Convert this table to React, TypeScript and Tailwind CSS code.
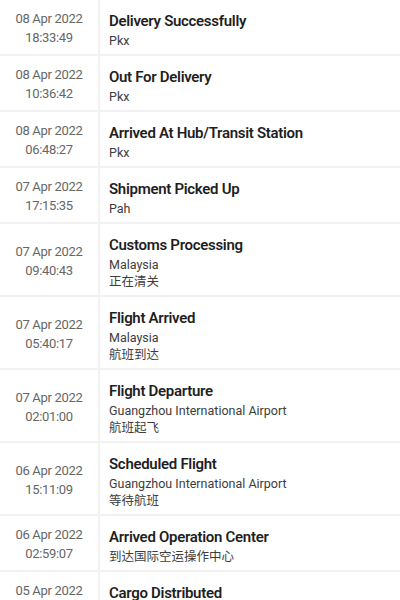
const EVENTS = [
    { date: "08 Apr 2022", time: "18:33:49", title: "Delivery Successfully", lines: ["Pkx"] },
    { date: "08 Apr 2022", time: "10:36:42", title: "Out For Delivery", lines: ["Pkx"] },
    { date: "08 Apr 2022", time: "06:48:27", title: "Arrived At Hub/Transit Station", lines: ["Pkx"] },
    { date: "07 Apr 2022", time: "17:15:35", title: "Shipment Picked Up", lines: ["Pah"] },
    { date: "07 Apr 2022", time: "09:40:43", title: "Customs Processing", lines: ["Malaysia", "正在清关"] },
    { date: "07 Apr 2022", time: "05:40:17", title: "Flight Arrived", lines: ["Malaysia", "航班到达"] },
    { date: "07 Apr 2022", time: "02:01:00", title: "Flight Departure", lines: ["Guangzhou International Airport", "航班起飞"] },
    { date: "06 Apr 2022", time: "15:11:09", title: "Scheduled Flight", lines: ["Guangzhou International Airport", "等待航班"] },
    { date: "06 Apr 2022", time: "02:59:07", title: "Arrived Operation Center", lines: ["到达国际空运操作中心"] },
    { date: "05 Apr 2022", time: "21:04:52", title: "Cargo Distributed", lines: ["广州"] },
];

export default function App() {
    return (
        <div
            className="w-[400px] h-[600px] overflow-hidden bg-white"
            style={{ fontFamily: 'Roboto, "Noto Sans CJK SC", sans-serif' }}
        >
            {EVENTS.map((ev, i) => (
                <div key={i} className="flex border-b-2 border-[#f2f2f2]">
                    {/* date column */}
                    <div className="w-[100px] shrink-0 flex flex-col items-center justify-center pt-[2px] border-r-2 border-[#f2f2f2] text-[13px] leading-[19px] tracking-[-0.3px] text-[#666]">
                        <span>{ev.date}</span>
                        <span>{ev.time}</span>
                    </div>
                    {/* details */}
                    <div className="flex-1 pl-[9px] pt-[11px] pb-[5px]">
                        <div className="text-[15px] leading-[21px] font-semibold tracking-[-0.3px] text-[#1f1f1f]">{ev.title}</div>
                        {ev.lines.map((l) => (
                            <div key={l} className="text-[12.5px] leading-[17px] text-[#3d3d3d]">
                                {l}
                            </div>
                        ))}
                    </div>
                </div>
            ))}
        </div>
    );
}
